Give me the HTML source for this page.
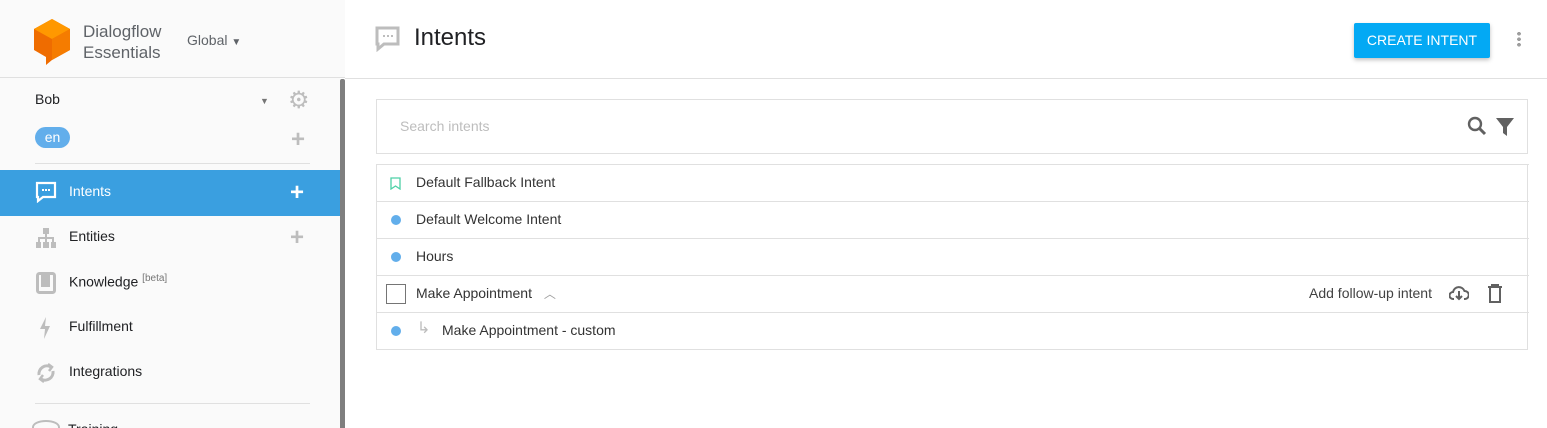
<!DOCTYPE html>
<html><head><style>
*{box-sizing:border-box;margin:0;padding:0}
html,body{width:1547px;height:428px;overflow:hidden}
body{font-family:"Liberation Sans",sans-serif;background:#fff;position:relative;color:#202124}
.abs{position:absolute}
#side{left:0;top:0;width:340px;height:428px;background:#fafafa}
#sidetop{left:0;top:0;width:345px;height:78px;background:#fafafa;border-bottom:1px solid #e0e0e0}
#scroll{left:340px;top:79px;width:5px;height:349px;background:#7f7f7f;border-radius:2px 2px 0 0}
.nav{left:0;width:340px;height:46px;font-size:14px;color:#202124}
.nav span{position:absolute;left:69px;top:13px}
.plus{position:absolute;font-size:24px;color:#bdbdbd;font-weight:bold;line-height:1}
.row{position:absolute;left:0;width:1152px;height:37px;border-top:1px solid #e0e0e0;font-size:14px;color:#333}
.row .t{position:absolute;left:39px;top:9px}
.dot{position:absolute;left:14px;top:13px;width:10px;height:10px;border-radius:50%;background:#62aeeb}
</style></head><body>
<div class="abs" id="side"></div>
<div class="abs" id="sidetop"></div>
<svg class="abs" style="left:33px;top:18px" width="38" height="48" viewBox="0 0 38 48"><polygon points="19,1 37,11 37,32 19,42 13,47 13,39 1,32 1,11" fill="#ef6c00"/><polygon points="19,1 37,11 19,21 1,11" fill="#ff9800"/><polygon points="19,21 37,11 37,32 19,42" fill="#f57c00"/></svg>
<div class="abs" style="left:83px;top:21px;font-size:17px;color:#5f6368;line-height:21px">Dialogflow<br>Essentials</div>
<div class="abs" style="left:187px;top:32px;font-size:14px;color:#5f6368">Global <span style="font-size:10px">▼</span></div>
<div class="abs" style="left:35px;top:91px;font-size:14px">Bob</div>
<div class="abs" style="left:260px;top:96px;font-size:9px;color:#757575">▼</div>
<div class="abs" style="left:288px;top:86px;font-size:24px;color:#bdbdbd">⚙</div>
<div class="abs" style="left:35px;top:127px;width:35px;height:21px;border-radius:11px;background:#62aeeb;color:#fff;font-size:14px;text-align:center;line-height:21px">en</div>
<div class="plus" style="left:291px;top:128px">+</div>
<div class="abs" style="left:35px;top:163px;width:275px;height:1px;background:#e0e0e0"></div>
<div class="abs nav" style="top:170px;background:#3a9fe0;color:#fff"><svg class="abs" style="left:35px;top:11px" width="22" height="22" viewBox="0 0 22 22"><path d="M2 2h18v14H8l-5 4v-4H2z" fill="none" stroke="#fff" stroke-width="2.2"/><rect x="7" y="8" width="2" height="2" fill="#fff"/><rect x="10" y="8" width="2" height="2" fill="#fff"/><rect x="13" y="8" width="2" height="2" fill="#fff"/></svg><span>Intents</span><div class="plus" style="left:290px;top:11px;color:#fff">+</div></div>
<div class="abs nav" style="top:215px"><svg class="abs" style="left:35px;top:12px" width="22" height="22" viewBox="0 0 22 22" fill="#bdbdbd"><rect x="8" y="1" width="6" height="6"/><rect x="10" y="7" width="2" height="4"/><rect x="3" y="10" width="16" height="2"/><rect x="3" y="10" width="2" height="5"/><rect x="17" y="10" width="2" height="5"/><rect x="10" y="10" width="2" height="5"/><rect x="1" y="15" width="5" height="6"/><rect x="8" y="15" width="6" height="6"/><rect x="16" y="15" width="5" height="6"/></svg><span>Entities</span><div class="plus" style="left:290px;top:11px">+</div></div>
<div class="abs nav" style="top:260px"><svg class="abs" style="left:36px;top:12px" width="20" height="22" viewBox="0 0 20 22"><rect x="1.5" y="1.5" width="17" height="19" rx="2" fill="none" stroke="#bdbdbd" stroke-width="3"/><rect x="5" y="3" width="9" height="12" fill="#bdbdbd"/></svg><span>Knowledge <sup style="font-size:10px;color:#757575">[beta]</sup></span></div>
<div class="abs nav" style="top:305px"><svg class="abs" style="left:39px;top:12px" width="12" height="22" viewBox="0 0 12 22"><path d="M7 0L1 12h5l-1 10 6-13H6z" fill="#bdbdbd"/></svg><span>Fulfillment</span></div>
<div class="abs nav" style="top:350px"><svg class="abs" style="left:35px;top:12px" width="22" height="22" viewBox="0 0 22 22" fill="none" stroke="#bdbdbd" stroke-width="3"><path d="M4 13A8 8 0 0 1 16 5"/><path d="M18 9A8 8 0 0 1 6 17"/><path d="M13 2l4 3-3 4M9 20l-4-3 3-4" stroke-width="2.5"/></svg><span>Integrations</span></div>
<div class="abs" style="left:35px;top:403px;width:275px;height:1px;background:#e0e0e0"></div>
<div class="abs" style="left:32px;top:420px;width:28px;height:14px;border:2px solid #bdbdbd;border-radius:50% 50% 0 0"></div>
<div class="abs" style="left:68px;top:421px;font-size:14px">Training</div>
<div class="abs" id="scroll"></div>
<div class="abs" style="left:345px;top:78px;width:1202px;height:1px;background:#e0e0e0"></div>
<svg class="abs" style="left:375px;top:26px" width="26" height="26" viewBox="0 0 26 26"><path d="M2 2h21v16H9l-6 5v-5H2z" fill="none" stroke="#bdbdbd" stroke-width="3"/><rect x="8" y="9" width="2" height="2" fill="#bdbdbd"/><rect x="12" y="9" width="2" height="2" fill="#bdbdbd"/><rect x="16" y="9" width="2" height="2" fill="#bdbdbd"/></svg>
<div class="abs" style="left:414px;top:24px;font-size:24px;color:#202124">Intents</div>
<div class="abs" style="left:1354px;top:23px;width:136px;height:35px;background:#03a9f4;border-radius:2px;box-shadow:0 2px 4px rgba(0,0,0,.25);color:#fff;font-size:14px;text-align:center;line-height:35px">CREATE INTENT</div>
<div class="abs" style="left:1517px;top:31px;width:4px;height:16px;background:radial-gradient(circle,#9e9e9e 1.8px,transparent 2px) 0 0/4px 5.5px"></div>
<div class="abs" style="left:376px;top:99px;width:1152px;height:55px;border:1px solid #e0e0e0"><div class="abs" style="left:23px;top:18px;font-size:14px;color:#bdbdbd">Search intents</div>
<svg class="abs" style="left:1090px;top:16px" width="20" height="20" viewBox="0 0 20 20"><circle cx="8" cy="8" r="6" fill="none" stroke="#616161" stroke-width="2.4"/><path d="M12.5 12.5L18 18" stroke="#616161" stroke-width="3"/></svg>
<svg class="abs" style="left:1118px;top:17px" width="20" height="20" viewBox="0 0 20 20"><path d="M1 1h18l-7 9v9l-4-3v-6z" fill="#616161"/></svg></div>
<div class="abs" style="left:376px;top:164px;width:1152px;height:186px;border:1px solid #e0e0e0;border-top:none">
<div class="row" style="top:0"><svg class="abs" style="left:13px;top:12px" width="11" height="13" viewBox="0 0 11 13"><path d="M1 1h9v11l-4.5-3L1 12z" fill="none" stroke="#4dd0a6" stroke-width="1.3"/></svg><span class="t">Default Fallback Intent</span></div>
<div class="row" style="top:37px"><div class="dot"></div><span class="t">Default Welcome Intent</span></div>
<div class="row" style="top:74px"><div class="dot"></div><span class="t">Hours</span></div>
<div class="row" style="top:111px"><div class="abs" style="left:9px;top:8px;width:20px;height:20px;border:1px solid #757575"></div><span class="t">Make Appointment <span style="color:#9e9e9e;margin-left:8px;font-size:12px">︿</span></span>
<span class="abs" style="left:932px;top:9px;font-size:14px;color:#424242">Add follow-up intent</span>
<svg class="abs" style="left:1072px;top:8px" width="20" height="18" viewBox="0 0 20 18"><path d="M5 15H4a3.5 3.5 0 0 1 0-7 6 6 0 0 1 11.5-1A4 4 0 0 1 16 15h-1" fill="none" stroke="#616161" stroke-width="2"/><path d="M10 7v8M7 12l3 3 3-3" fill="none" stroke="#616161" stroke-width="2"/></svg>
<svg class="abs" style="left:1110px;top:8px" width="16" height="19" viewBox="0 0 16 19"><path d="M1 3h14M5 3V1h6v2M3 4v14h10V4" fill="none" stroke="#616161" stroke-width="2"/></svg></div>
<div class="row" style="top:148px"><div class="dot"></div><span class="abs" style="left:40px;top:5px;font-size:16px;color:#bdbdbd">↳</span><span class="t" style="left:65px">Make Appointment - custom</span></div>
</div>
</body></html>
